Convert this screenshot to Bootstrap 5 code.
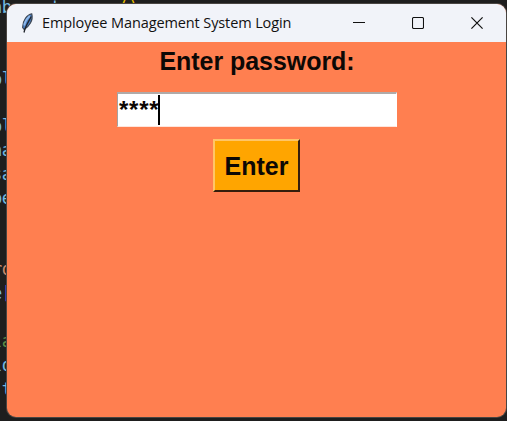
<!DOCTYPE html>
<html lang="en">
<head>
<meta charset="utf-8">
<title>Employee Management System Login</title>
<meta name="viewport" content="width=device-width, initial-scale=1">
<link href="https://cdn.jsdelivr.net/npm/bootstrap@5.3.0/dist/css/bootstrap.min.css" rel="stylesheet">
<style>
body{height:421px;background:#1e1e1e}
.editor{height:421px;font:17px/23.85px "DejaVu Sans Mono",monospace;color:#76b9e0}
.editor pre{font:inherit;margin:-4px 0 0 -8px;overflow:visible;letter-spacing:-.5px}
.c-gold{color:#e5c000}.c-or{color:#c98a6c}.c-pu{color:#9a5fd0}.c-gr{color:#5f9048}.c-red{color:#a83c3c}
.tk-window{left:7px;top:4px;width:499px;height:413px;border-radius:9px;background:#ff7f50;box-shadow:0 0 0 1px #494542}
.title-bar{height:38px;background:#f1f3f9;color:#111;font:14.5px "Open Sans",sans-serif}
.title-icon{margin-left:12px;width:16px;height:22px}
.title-text{margin-left:7px;margin-top:-1px;letter-spacing:-.11px}
.win-btn{width:58.5px;height:38px}
.win-btn:last-child{width:59px}
.tk-body{font:bold 25px/30px "Liberation Sans",Arial,sans-serif;color:#0d0805}
.prompt{height:50px;padding-top:4px;padding-left:1px;letter-spacing:-.05px}
.entry{width:280px;height:35px;background:#fff;border:1px solid #fff;border-top:2px solid #b0aaa8;border-left-color:#a3a3a3;border-bottom-color:#ffe5dc;margin-left:1px;padding-left:1px}
.stars{font-size:24px;letter-spacing:.75px;padding-top:1px}
.caret{width:2px;height:30px;margin:1px 0 0 -1px;background:#000}
.enter-btn{width:87px;height:53px;margin-top:12px;background:#ffa500;border:2px solid;border-color:#ffc567 #351d0c #351d0c #ffc567;border-radius:0;font:inherit;color:#0d0805;padding:0}
</style>
</head>
<body class="position-relative overflow-hidden">
<div class="editor overflow-hidden"><pre>nb    t      <span class="c-gold">()</span>


ol

ol
na
sa
pe


<span class="c-or">ro</span>
e<span class="c-pu">[</span>

<span class="c-gr">la</span>
lo
<span class="c-red">'</span>t</pre></div>
<main class="tk-window position-absolute overflow-hidden">
  <header class="title-bar d-flex align-items-center">
    <svg class="title-icon" viewBox="0 0 16 22" aria-hidden="true">
      <path d="M12.8 1.8C8.4 2.5 3.6 8 3.6 15.5l1.6 2C10 14.5 14.6 8.5 12.8 1.8Z" fill="#4c80c4" stroke="#3d4653" stroke-width="1.1"/>
      <path d="M10.8 4C8 6.5 5.8 10 5.2 13.5" fill="none" stroke="#8fb9ec" stroke-width="1.7"/>
      <path d="M12.2 4.5C9.5 10 6.4 14 5 20.5" fill="none" stroke="#20242b" stroke-width="1.3"/>
    </svg>
    <span class="title-text text-nowrap">Employee Management System Login</span>
    <div class="d-flex ms-auto">
      <span class="win-btn d-flex align-items-center justify-content-center"><svg width="12" height="12"><path d="M0 5.5h12" stroke="#111"/></svg></span>
      <span class="win-btn d-flex align-items-center justify-content-center"><svg width="12" height="12"><rect x=".5" y=".5" width="11" height="11" rx="1.2" fill="none" stroke="#111" stroke-width="1.1"/></svg></span>
      <span class="win-btn d-flex align-items-center justify-content-center"><svg width="12" height="12"><path d="m.4.4 11.2 11.2M11.6.4.4 11.6" stroke="#111" stroke-width="1.2"/></svg></span>
    </div>
  </header>
  <form class="tk-body d-flex flex-column align-items-center" onsubmit="return false">
    <label class="prompt">Enter password:</label>
    <div class="entry d-flex"><span class="stars">****</span><span class="caret"></span></div>
    <button class="btn enter-btn" type="button">Enter</button>
  </form>
</main>
<script src="https://cdn.jsdelivr.net/npm/bootstrap@5.3.0/dist/js/bootstrap.bundle.min.js"></script>
</body>
</html>
